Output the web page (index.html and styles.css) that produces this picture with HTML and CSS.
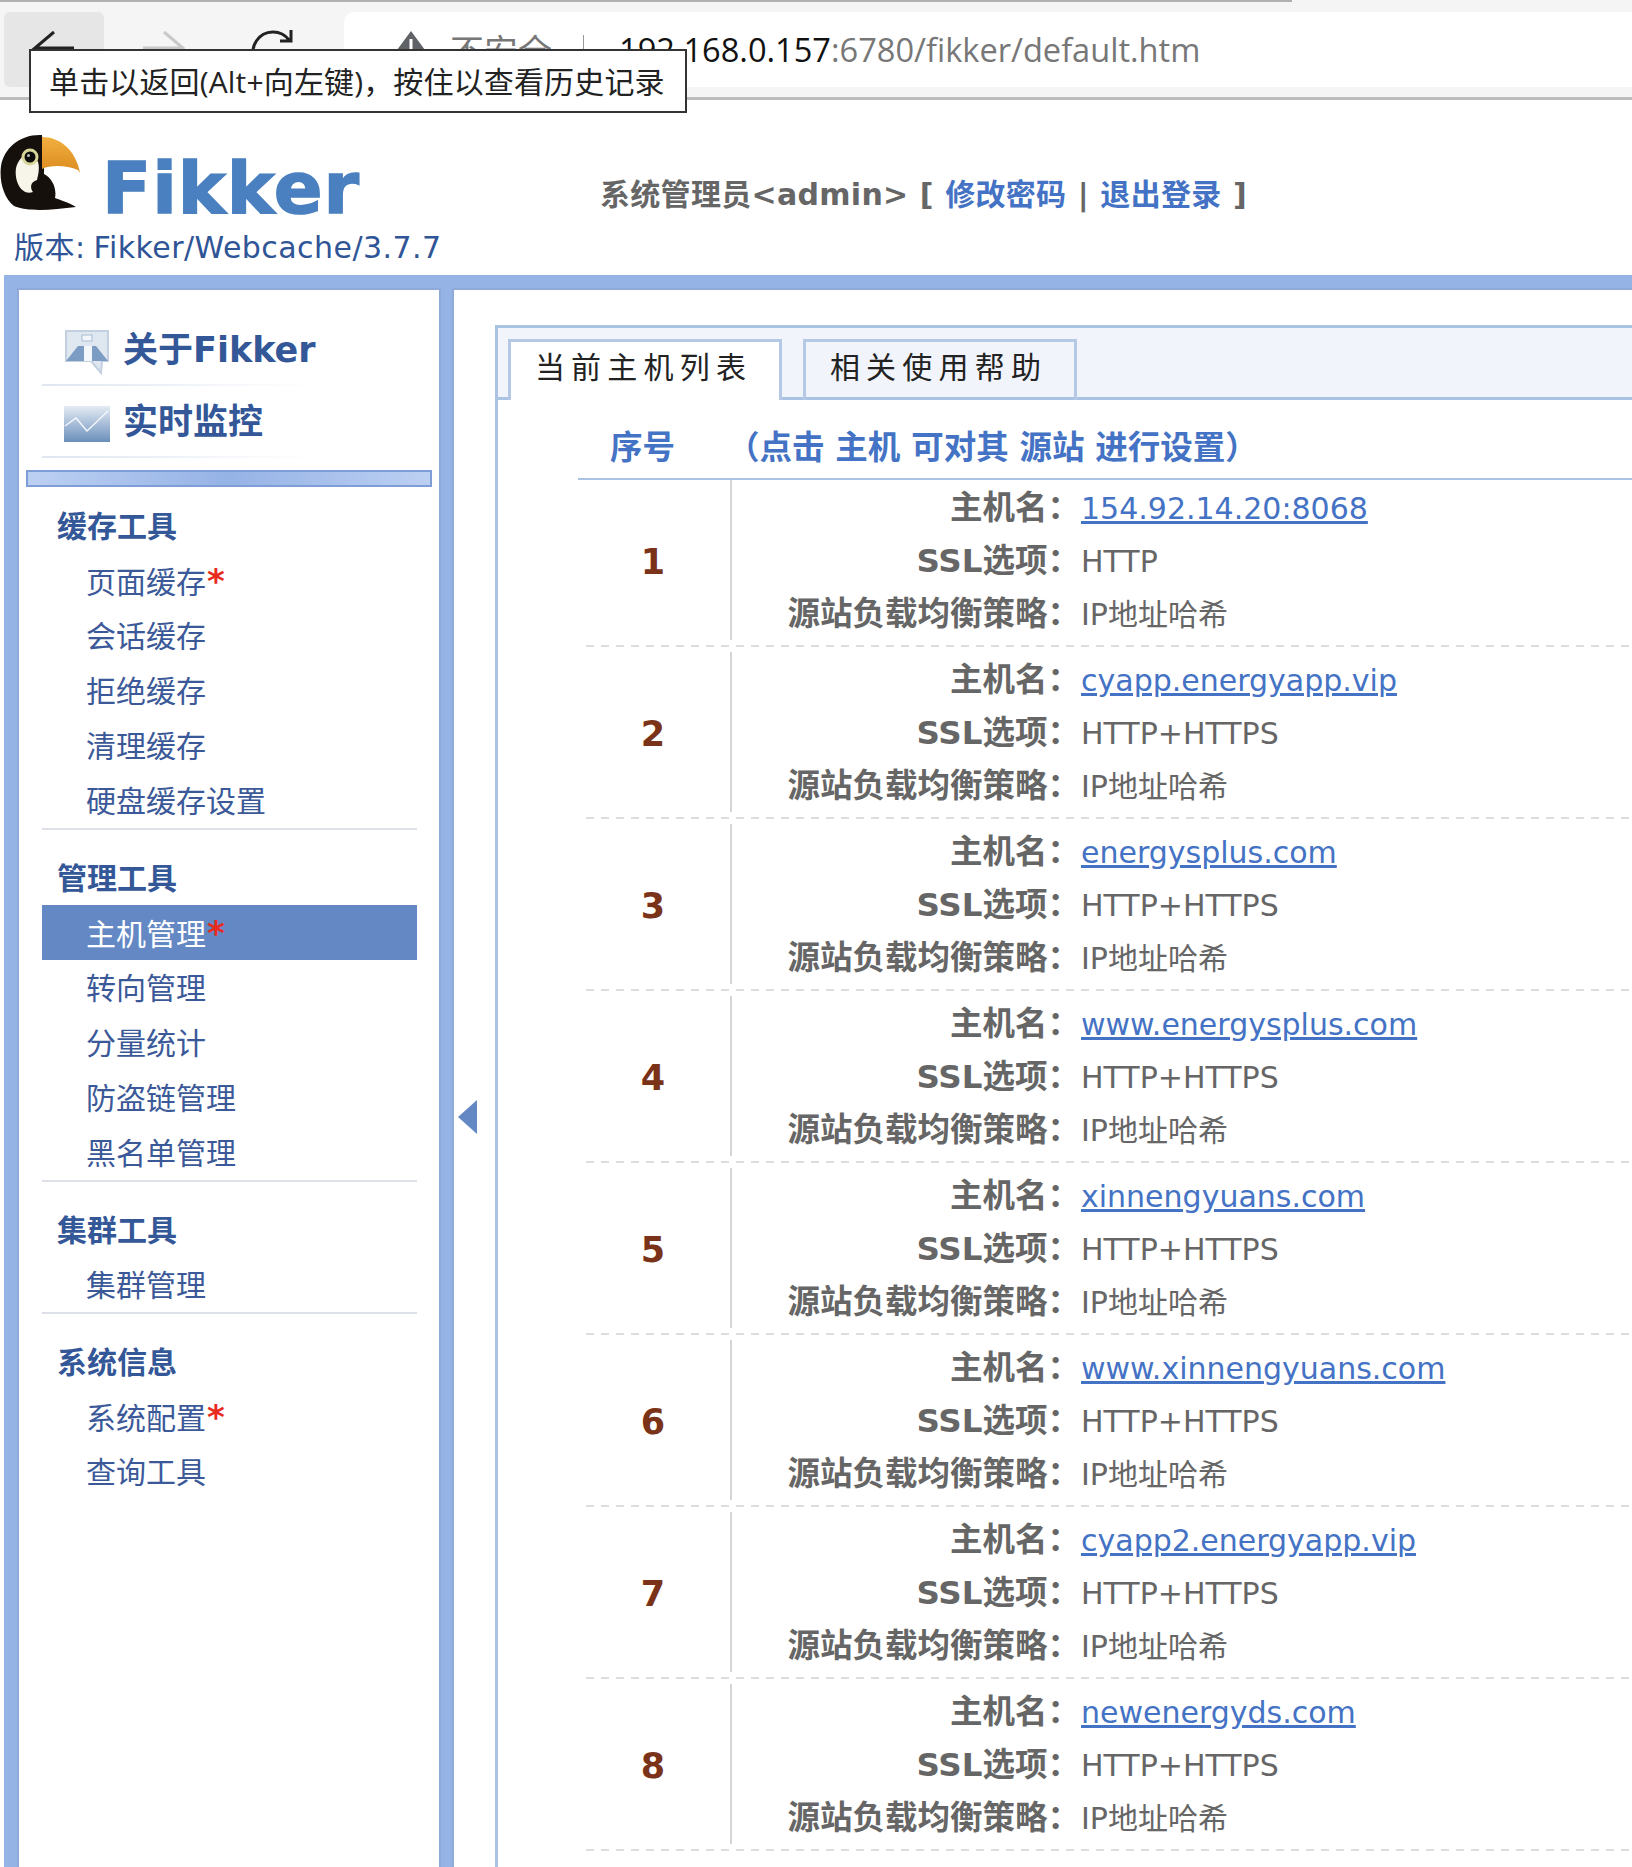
FILE: index.html
```html
<!DOCTYPE html>
<html lang="zh-CN">

<head>
    <meta charset="UTF-8">
    <title>Fikker</title>
    <link rel="stylesheet" href="styles.css">
</head>

<body>
    <div class="toolbar">
        <div class="tabline"></div>
        <div class="toolrow">
            <div class="navbtn hover">
                <svg width="60" height="60" viewBox="0 0 60 60"><path d="M24 5 L5 21 L44 21 M5 21 L24 40" fill="none" stroke="#222" stroke-width="3"/></svg>
            </div>
            <div class="navbtn">
                <svg width="60" height="60" viewBox="0 0 60 60"><path d="M13 21 L53 21 M34 5 L53 21 L34 40" fill="none" stroke="#c8c8c8" stroke-width="3"/></svg>
            </div>
            <div class="navbtn">
                <svg width="60" height="60" viewBox="0 0 60 60"><path d="M49 13 A20 20 0 1 0 53 24 M51 3 L51 14 L40 14" fill="none" stroke="#222" stroke-width="3"/></svg>
            </div>
            <div class="address">
                <svg class="warn" width="34" height="34" viewBox="0 0 34 34"><path d="M17 0 L31 19 L31 34 L3 34 L3 19 Z" fill="#5f6368"/><rect x="15.5" y="8" width="3" height="14" fill="#fff"/></svg>
                <span class="insecure">不安全</span>
                <span class="addr-sep"></span>
                <span class="url"><b>192.168.0.157</b>:6780/fikker/default.htm</span>
            </div>
        </div>
        <div class="tooltip">单击以返回(Alt+向左键)，按住以查看历史记录</div>
    </div>

    <div class="header">
        <div class="brand">
            <div class="logo">
                <svg width="82" height="87" viewBox="0 0 82 87">
                    <defs>
                        <linearGradient id="beak" x1="0" y1="0" x2="0" y2="1">
                            <stop offset="0" stop-color="#f0b040"/>
                            <stop offset="1" stop-color="#dc8a1e"/>
                        </linearGradient>
                    </defs>
                    <path d="M42 5 C20 4 4 18 1 36 C-1 52 4 68 14 76 C28 82 52 80 76 77 C68 72 60 70 55 68 C57 58 52 48 44 44 L44 36 Z" fill="#15100c"/>
                    <path d="M42 7 C60 7 76 20 80 43 L78 40 C68 36 52 34 42 39 Z" fill="url(#beak)"/>
                    <path d="M16 38 C19 26 30 18 38 32 C40 38 38 46 37 50 C30 52 30 58 33 62 C22 66 14 52 16 38 Z" fill="#f7f4ea"/>
                    <circle cx="30" cy="27" r="8.5" fill="#d8d59a"/>
                    <circle cx="30" cy="27" r="5.5" fill="#0c0c0c"/>
                    <circle cx="28.5" cy="25.5" r="1.5" fill="#bbb"/>
                </svg>
                <span class="logotext">Fikker</span>
            </div>
            <div class="version">版本: Fikker/Webcache/3.7.7</div>
        </div>
        <div class="userbar">系统管理员&lt;admin&gt; [ <a>修改密码</a> | <a>退出登录</a> ]</div>
    </div>

    <div class="frame">
        <div class="side">
            <div class="quick">
                <svg width="46" height="46" viewBox="0 0 46 46">
                    <path d="M2 2 H44 V32 H38 L37 44 L27 32 H2 Z" fill="#dfe7f1" stroke="#c3d0e0" stroke-width="2"/>
                    <path d="M2 32 L14 17 H32 L44 32 Z" fill="#7c9cc3"/>
                    <rect x="20" y="17" width="8" height="15" fill="#f3f6fa"/>
                    <rect x="18" y="6" width="10" height="6" fill="#f3f6fa" stroke="#a9bcd4"/>
                </svg>
                关于Fikker
            </div>
            <div class="quick">
                <svg width="46" height="36" viewBox="0 0 46 36">
                    <defs>
                        <linearGradient id="chartfill" x1="0" y1="0" x2="0" y2="1">
                            <stop offset="0" stop-color="#e4ebf4"/>
                            <stop offset="1" stop-color="#6a8fbb"/>
                        </linearGradient>
                    </defs>
                    <rect width="46" height="36" fill="url(#chartfill)"/>
                    <path d="M1 20 L12 12 L23 25 L44 5" fill="none" stroke="#f4f7fb" stroke-width="1.5"/>
                </svg>
                实时监控
            </div>
            <div class="sidebar-bar"></div>

            <div class="group">
                <h3>缓存工具</h3>
                <a>页面缓存<i>*</i></a>
                <a>会话缓存</a>
                <a>拒绝缓存</a>
                <a>清理缓存</a>
                <a>硬盘缓存设置</a>
            </div>
            <div class="group">
                <h3>管理工具</h3>
                <a class="active">主机管理<i>*</i></a>
                <a>转向管理</a>
                <a>分量统计</a>
                <a>防盗链管理</a>
                <a>黑名单管理</a>
            </div>
            <div class="group">
                <h3>集群工具</h3>
                <a>集群管理</a>
            </div>
            <div class="group last">
                <h3>系统信息</h3>
                <a>系统配置<i>*</i></a>
                <a>查询工具</a>
            </div>
        </div>

        <div class="main">
            <div class="toggle"><span class="arrow"></span></div>
            <div class="panel">
                <div class="tabs">
                    <div class="tab on">当前主机列表</div>
                    <div class="tab">相关使用帮助</div>
                </div>
                <div class="listhead">
                    <span class="col-no">序号</span>
                    <span>（点击 主机 可对其 源站 进行设置）</span>
                </div>
                <div class="hosts" id="hosts"></div>
            </div>
        </div>
    </div>
    <script>
        const hosts = [
            ['154.92.14.20:8068', 'HTTP'],
            ['cyapp.energyapp.vip', 'HTTP+HTTPS'],
            ['energysplus.com', 'HTTP+HTTPS'],
            ['www.energysplus.com', 'HTTP+HTTPS'],
            ['xinnengyuans.com', 'HTTP+HTTPS'],
            ['www.xinnengyuans.com', 'HTTP+HTTPS'],
            ['cyapp2.energyapp.vip', 'HTTP+HTTPS'],
            ['newenergyds.com', 'HTTP+HTTPS']
        ]
        let html = ''
        hosts.forEach((h, i) => {
            html += '<div class="host">' +
                '<div class="num">' + (i + 1) + '</div>' +
                '<div class="info">' +
                '<b>主机名：</b><span><a>' + h[0] + '</a></span>' +
                '<b>SSL选项：</b><span>' + h[1] + '</span>' +
                '<b>源站负载均衡策略：</b><span>IP地址哈希</span>' +
                '</div></div>'
        })
        document.querySelector('#hosts').innerHTML = html
    </script>
</body>

</html>
```

FILE: styles.css
```css
* {
    padding: 0;
    margin: 0;
    box-sizing: border-box;
}

html,
body {
    height: 1867px;
    overflow: hidden;
}

body {
    background: #fff;
    font-family: "DejaVu Sans", "Noto Sans CJK SC", sans-serif;
    font-size: 30px;
    color: #666;
}

/* browser bar */
.toolbar {
    position: relative;
    height: 100px;
    background: #f5f5f5;
    border-bottom: 3px solid #bcbcbc;
}

.tabline {
    width: 1292px;
    height: 2px;
    background: #b0b0b0;
}

.toolrow {
    display: flex;
    padding: 10px 0 0 4px;
}

.navbtn {
    width: 100px;
    height: 75px;
    padding: 15px 0 0 26px;
    overflow: hidden;
    border-radius: 6px;
}

.navbtn.hover {
    background: #e6e6e6;
}

.navbtn + .navbtn {
    width: 110px;
}

.address {
    flex: 1;
    height: 75px;
    margin-left: 20px;
    background: #fff;
    border-radius: 10px 0 0 10px;
    display: flex;
    align-items: center;
    padding-left: 50px;
    font-family: "Open Sans", "Noto Sans CJK SC", sans-serif;
    font-size: 32.6px;
    color: #777;
}

.warn {
    margin-bottom: 4px;
}

.insecure {
    margin-left: 22px;
    font-size: 34px;
}

.addr-sep {
    width: 1px;
    height: 30px;
    background: #999;
    margin: 0 35px 0 31px;
}

.url b {
    font-weight: 400;
    color: #111;
}

.tooltip {
    position: absolute;
    left: 29px;
    top: 49px;
    width: 658px;
    height: 64px;
    border: 2px solid #333;
    background: #fff;
    padding-left: 18px;
    line-height: 62px;
    font-size: 30px;
    letter-spacing: 0.15px;
    font-family: "Open Sans", "Noto Sans CJK SC", sans-serif;
    color: #222;
    white-space: nowrap;
}

/* header */
.header {
    height: 175px;
    position: relative;
    display: flex;
}

.brand {
    width: 600px;
    padding-top: 30px;
}

.logo {
    display: flex;
    height: 87px;
}

.logotext {
    margin: 22px 0 0 20px;
    font-size: 72px;
    line-height: 72px;
    font-weight: 700;
    letter-spacing: 1px;
    color: #4a80bf;
    -webkit-text-stroke: 1.5px #4a80bf;
}

.version {
    margin: 6px 0 0 14px;
    font-size: 30px;
    letter-spacing: 0.45px;
    word-spacing: -2px;
    color: #2f5597;
    white-space: nowrap;
}

.userbar {
    padding-top: 70px;
    font-weight: 700;
    font-size: 30px;
    letter-spacing: 0.3px;
    word-spacing: 0.6px;
    white-space: nowrap;
}

.userbar a {
    color: #4472c4;
}

/* frame */
.frame {
    display: flex;
    height: 1592px;
    margin-left: 4px;
    background: #96b3e6;
    padding-top: 13px;
}

.side {
    width: 424px;
    margin-left: 13px;
    background: #fff;
    padding: 24px 0 0 23px;
    border: solid #8fa9da;
    border-width: 2px 2px 0 2px;
}

.quick {
    display: flex;
    align-items: center;
    width: 273px;
    height: 72px;
    padding: 0 0 8px 22px;
    gap: 13px;
    font-size: 35px;
    font-weight: 700;
    color: #335797;
    white-space: nowrap;
    background: linear-gradient(to right, #dfe6f1, #fff) left bottom / 100% 2px no-repeat;
}

.quick svg {
    flex-shrink: 0;
    margin-top: 12px;
}

.sidebar-bar {
    width: 406px;
    height: 17px;
    margin: 12px 0 0 -16px;
    background: linear-gradient(to right, #bcd0f2, #96b3e6 50%, #bcd0f2);
    border: 2px solid #7f9ed8;
}

.group {
    width: 375px;
    padding-top: 21px;
    border-bottom: 2px solid #dfe1ea;
}

.sidebar-bar + .group {
    padding-top: 12px;
}

.group.last {
    border-bottom: none;
}

.group h3 {
    height: 54px;
    line-height: 56px;
    padding-left: 15px;
    font-size: 30px;
    color: #335797;
}

.group a {
    display: block;
    height: 55px;
    line-height: 57px;
    padding-left: 44px;
    color: #3b5998;
}

.group a i {
    margin-left: 1px;
    color: #e82a1e;
    font-size: 34px;
    font-style: normal;
    font-weight: 700;
}

.group a.active {
    background: #6388c4;
    color: #fff;
}

.main {
    flex: 1;
    margin-left: 11px;
    background: #fff;
    display: flex;
    padding-top: 35px;
    border: solid #8fa9da;
    border-width: 2px 0 0 2px;
}

.toggle {
    width: 41px;
    padding-top: 775px;
}

.arrow {
    display: block;
    margin-left: 4px;
    width: 0;
    height: 0;
    border-style: solid;
    border-width: 17px 19px 17px 0;
    border-color: transparent #6388c4 transparent transparent;
}

.panel {
    flex: 1;
    border: solid #abc3e3;
    border-width: 3px 0 0 3px;
}

.tabs {
    display: flex;
    gap: 21px;
    height: 72px;
    padding: 11px 0 0 10px;
    background: #f1f4fa;
    border-bottom: 3px solid #abc3e3;
}

.tab {
    width: 274px;
    height: 61px;
    margin-bottom: -3px;
    padding-right: 3px;
    text-align: center;
    line-height: 52px;
    letter-spacing: 6.2px;
    font-size: 30px;
    color: #222;
    border: 3px solid #b5c9e6;
    border-bottom: none;
}

.tab.on {
    background: #fff;
}

.listhead {
    display: flex;
    margin-left: 80px;
    height: 80px;
    padding-top: 17px;
    line-height: 62px;
    font-size: 32.5px;
    word-spacing: -0.5px;
    font-weight: 700;
    white-space: nowrap;
    color: #4472c4;
    border-bottom: 2px solid #abc3e3;
}

.col-no {
    width: 149px;
    padding-left: 32px;
}

.hosts {
    margin-left: 88px;
}

.host {
    display: flex;
    padding: 5px 0 7px;
    background: repeating-linear-gradient(to right, #ddd 0 8px, transparent 8px 15px) left bottom / 100% 2px no-repeat;
}

.host:first-child {
    padding-top: 0;
}

.num {
    width: 146px;
    padding-right: 10px;
    height: 160px;
    line-height: 164px;
    text-align: center;
    font-size: 35px;
    font-weight: 700;
    color: #7a3318;
    border-right: 2px solid #d5d5d5;
}

.info {
    flex: 1;
    display: grid;
    grid-template-columns: 348px 1fr;
    grid-auto-rows: 53px;
    line-height: 55px;
    padding-top: 1px;
}

.info b {
    text-align: right;
    font-size: 32.5px;
    white-space: nowrap;
}

.info span {
    padding-left: 1px;
    white-space: nowrap;
}

.info a {
    color: #4472c4;
    text-decoration: underline;
    text-decoration-thickness: 2.5px;
}
```
